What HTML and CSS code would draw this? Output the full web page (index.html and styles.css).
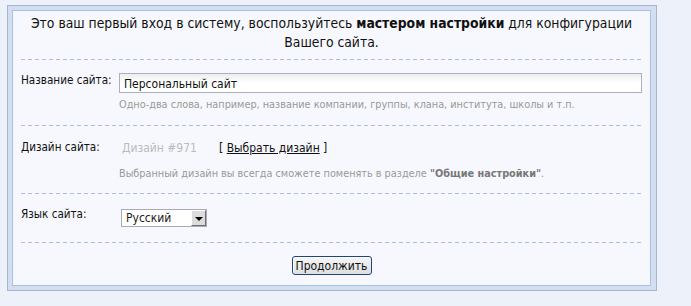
FILE: index.html
```html
<html>
<head>
    <link rel="stylesheet" href="styles.css">
</head>
<body>
    <div class="frame">
        <div class="panel">
            <div class="intro">
                Это ваш первый вход в систему, воспользуйтесь <b>мастером настройки</b> для конфигурации Вашего сайта.
            </div>

            <div class="row row-name">
                <div class="label">Название сайта:</div>
                <div class="field">
                    <input type="text" class="text-input" value="Персональный сайт">
                    <div class="hint">Одно-два слова, например, название компании, группы, клана, института, школы и т.п.</div>
                </div>
            </div>

            <div class="row row-design">
                <div class="label">Дизайн сайта:</div>
                <div class="field">
                    <div class="design-line">
                        <span class="design-name">Дизайн #971</span>
                        <span class="design-pick">[ <a href="#">Выбрать дизайн</a> ]</span>
                    </div>
                    <div class="hint">Выбранный дизайн вы всегда сможете поменять в разделе <b>"Общие настройки"</b>.</div>
                </div>
            </div>

            <div class="row row-lang">
                <div class="label">Язык сайта:</div>
                <div class="field">
                    <div class="select">
                        <span class="select-value">Русский</span>
                        <span class="select-arrow"></span>
                    </div>
                </div>
            </div>

            <div class="actions">
                <button class="submit">Продолжить</button>
            </div>
        </div>
    </div>
</body>
</html>
```

FILE: styles.css
```css
body {
    margin: 0;
    background-color: #edf1fa;
    font-family: Tahoma, "DejaVu Sans Condensed", "DejaVu Sans", sans-serif;
    color: #111;
}

.frame {
    width: 648px;
    height: 284px;
    margin: 5px 0 0 7px;
    border: 1px solid #a7b4cc;
    background-color: #d3def1;
    padding: 0;
    box-sizing: content-box;
    display: flex;
}

.panel {
    flex: 1;
    margin: 4px 5px 4px 4px;
    border: 1px solid #a6c1e6;
    background-color: #f7f8fd;
    padding: 0 8px;
}

.intro {
    font-size: 13.8px;
    line-height: 19px;
    text-align: center;
    padding: 3px 4px 8px;
    height: 38px;
    background: repeating-linear-gradient(to right, #a9bfe8 0 4px, transparent 4px 7px) bottom left / 100% 1px no-repeat;
}

.row {
    display: grid;
    grid-template-columns: 98px 1fr;
    background: repeating-linear-gradient(to right, #a9bfe8 0 4px, transparent 4px 7px) bottom left / 100% 1px no-repeat;
}

.row-name {
    padding: 13px 0 13px;
    height: 40px;
}

.row-design {
    padding: 14px 0 13px;
    height: 41px;
}

.row-lang {
    padding: 15px 0 15px;
    height: 19px;
}

.label {
    font-size: 11.6px;
    line-height: 14px;
}

.row-lang .label {
    margin-top: -2px;
}

.text-input {
    display: block;
    width: 100%;
    height: 20px;
    box-sizing: border-box;
    margin: 0;
    padding: 1px 4px 0;
    border: 1px solid #abafbf;
    background: linear-gradient(#eceeee, #ffffff 9px);
    font-family: inherit;
    font-size: 12px;
    color: #111;
    outline: none;
}

.hint {
    font-size: 10.8px;
    line-height: 14px;
    color: #999;
    margin-top: 5px;
}

.hint b {
    color: #777;
}

.design-line {
    font-size: 12px;
    line-height: 16px;
    height: 16px;
    display: flex;
}

.design-name {
    color: #bbb;
    padding-left: 3px;
    width: 97px;
}

.design-pick {
    color: #111;
}

.design-pick a {
    color: #111;
    text-decoration: underline;
}

.row-design .hint {
    margin-top: 11px;
}

.select {
    margin-left: 2px;
    width: 84px;
    height: 16px;
    border: 1px solid #a6abb6;
    background-color: #fff;
    display: flex;
    justify-content: space-between;
    align-items: stretch;
}

.select-value {
    font-size: 12px;
    line-height: 16px;
    padding-left: 4px;
    color: #222;
}

.select-arrow {
    width: 15px;
    background-color: #dcdcdc;
    border: 1px solid #6f6f6f;
    border-top-color: #fff;
    border-left-color: #fff;
    box-sizing: border-box;
    position: relative;
}

.select-arrow::after {
    content: "";
    position: absolute;
    left: 3px;
    top: 6px;
    border-left: 4px solid transparent;
    border-right: 4px solid transparent;
    border-top: 4px solid #000;
}

.actions {
    text-align: center;
    padding-top: 13px;
}

.submit {
    width: 80px;
    height: 19px;
    padding: 0;
    font-family: inherit;
    font-size: 12px;
    color: #111;
    border: 1px solid #1d4681;
    border-radius: 3px;
    background: linear-gradient(#f6f6f6, #dedede);
    box-shadow: inset 1px 1px 0 #fff;
    cursor: pointer;
}
```
